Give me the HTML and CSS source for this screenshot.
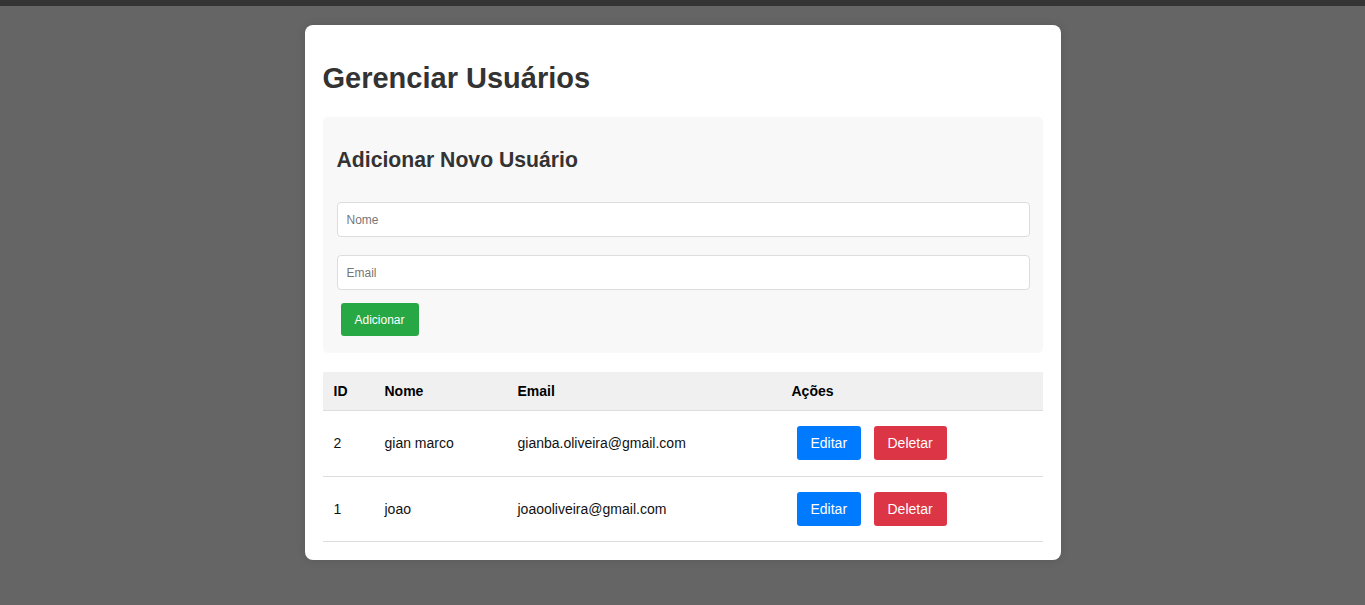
FILE: index.html
```html
<!DOCTYPE html>
<html lang="pt-BR">
<head>
<meta charset="utf-8">
<title>Gerenciar Usuários</title>
<link rel="stylesheet" href="styles.css">
</head>
<body>
<div class="topbar"></div>
<div class="overlay">
  <div class="card">
    <h1 class="title">Gerenciar Usuários</h1>
    <div class="form-box">
      <h2 class="subtitle">Adicionar Novo Usuário</h2>
      <input class="field field-first" type="text" placeholder="Nome">
      <input class="field" type="email" placeholder="Email">
      <button class="btn btn-add">Adicionar</button>
    </div>
    <table class="users">
      <colgroup>
        <col class="c-id"><col class="c-nome"><col class="c-email"><col class="c-acoes">
      </colgroup>
      <thead>
        <tr><th>ID</th><th>Nome</th><th>Email</th><th>Ações</th></tr>
      </thead>
      <tbody>
        <tr>
          <td>2</td><td>gian marco</td><td>gianba.oliveira@gmail.com</td>
          <td class="actions"><button class="btn btn-edit">Editar</button><button class="btn btn-del">Deletar</button></td>
        </tr>
        <tr>
          <td>1</td><td>joao</td><td>joaooliveira@gmail.com</td>
          <td class="actions"><button class="btn btn-edit">Editar</button><button class="btn btn-del">Deletar</button></td>
        </tr>
      </tbody>
    </table>
  </div>
</div>
</body>
</html>
```

FILE: styles.css
```css
html, body {
  margin: 0;
  padding: 0;
  height: 100%;
}
body {
  background: #656565;
  font-family: "Liberation Sans", Arial, sans-serif;
  font-size: 14px;
  color: #000;
}
.topbar {
  height: 6px;
  background: #343434;
}
.overlay {
  display: flex;
  justify-content: center;
  padding-top: 19px;
}
.card {
  width: 720px;
  background: #fff;
  border-radius: 8px;
  padding: 18px 18px 18px;
  box-shadow: 0 0 10px rgba(0, 0, 0, 0.12);
}
.title {
  font-size: 29px;
  font-weight: bold;
  color: #333;
  margin: 19px 0 0;
  line-height: 32px;
  height: 55px;
}
.form-box {
  background: #f8f8f8;
  border-radius: 5px;
  padding: 14px 13px 17px 14px;
  margin-bottom: 19px;
}
.subtitle {
  font-size: 21.2px;
  font-weight: bold;
  color: #333;
  margin: 17px 0 0;
  line-height: 24px;
  height: 54px;
}
.field {
  display: block;
  box-sizing: border-box;
  width: 100%;
  height: 35px;
  border: 1px solid #ddd;
  border-radius: 4px;
  background: #fff;
  padding: 0 9px;
  font-family: "Liberation Sans", Arial, sans-serif;
  font-size: 12px;
  color: #333;
  margin: 0 0 13px;
}
.field-first {
  margin-bottom: 18px;
}
.field::placeholder {
  color: #777;
}
.btn {
  border: none;
  color: #fff;
  font-family: "Liberation Sans", Arial, sans-serif;
  cursor: pointer;
}
.btn-add {
  display: block;
  margin-left: 4px;
  height: 33px;
  padding: 0 14px;
  font-size: 12px;
  background: #28a745;
  border-radius: 3px;
}
.users {
  width: 100%;
  border-collapse: collapse;
  font-size: 14px;
}
.c-id { width: 51px; }
.c-nome { width: 133px; }
.c-email { width: 274px; }
.users th {
  text-align: left;
  font-weight: bold;
  background: #f0f0f0;
  padding: 0 11px;
  height: 38px;
  border-bottom: 1px solid #ddd;
}
.users td {
  padding: 0 11px;
  height: 64.5px;
  border-bottom: 1px solid #ddd;
  color: #111;
}
.users td.actions {
  padding-left: 16px;
}
.btn-edit, .btn-del {
  height: 34px;
  padding: 0 14px;
  font-size: 14px;
  border-radius: 3px;
  vertical-align: middle;
}
.btn-edit {
  background: #007bff;
  width: 64px;
  margin-right: 13px;
}
.btn-del {
  background: #dc3545;
  width: 73px;
}
```
